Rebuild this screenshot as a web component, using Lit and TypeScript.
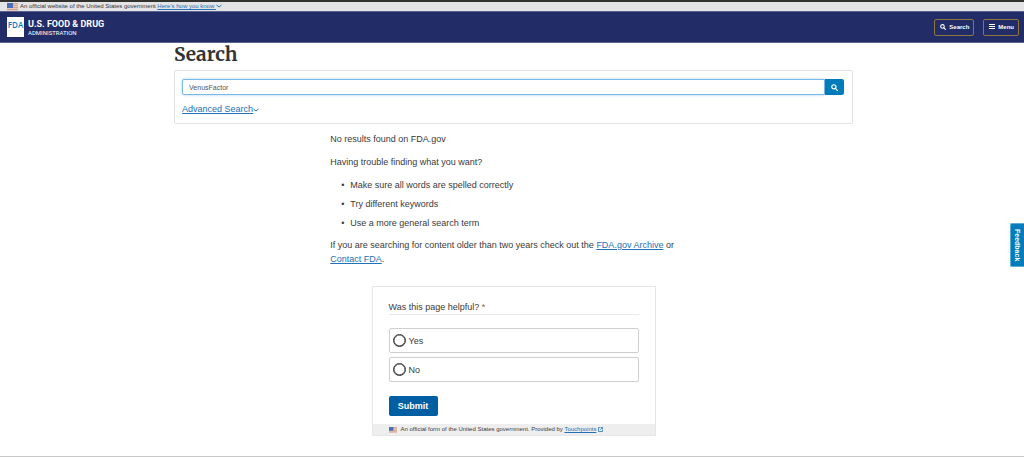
import { LitElement, html, css, svg } from "lit";
import { customElement, property } from "lit/decorators.js";

const magnifier = html`<svg class="icon" viewBox="0 0 16 16" aria-hidden="true">
  <circle cx="6.5" cy="6.5" r="4.8" fill="none" stroke="currentColor" stroke-width="2.8" />
  <path d="M10.500 10.500l4 4" stroke="currentColor" stroke-width="3" stroke-linecap="round" />
</svg>`;

@customElement("us-flag")
export class UsFlag extends LitElement {
  static styles = css`
    :host { display: block; flex: none; width: 11px; height: 8px; }
    svg { display: block; width: 100%; height: 100%; }
  `;
  render() {
    return html`<svg viewBox="0 0 22 16" preserveAspectRatio="none" aria-hidden="true">
      <rect width="22" height="16" fill="#e6cbbd" />
      ${[0, 4, 8, 12].map((y) => svg`<rect y=${y} width="22" height="2" fill="#d3a48f" />`)}
      <rect width="12" height="10" fill="#4a6fb8" />
    </svg>`;
  }
}

@customElement("choice-option")
export class ChoiceOption extends LitElement {
  @property() label = "";
  static styles = css`
    :host { display: block; }
    .option {
      display: flex; align-items: center; gap: 3px; height: 25px; box-sizing: border-box;
      padding: 0 4px 0 3px; border: 1px solid #cfcfd1; border-radius: 2px; background: #fff;
    }
    input {
      appearance: none; box-sizing: border-box; width: 13px; height: 13px; margin: 0;
      border: 1px solid #333; outline: 0; border-radius: 50%; background: #fff;
      box-shadow: inset 0 0 0 0.5px #333;
    }
    input:checked { background: #005ea2; }
  `;
  render() {
    return html`<label class="option"><input type="radio" name="helpful" /><span>${this.label}</span></label>`;
  }
}

@customElement("app-root")
export class AppRoot extends LitElement {
  static styles = css`
    :host {
      display: block; position: relative; min-height: 100vh; box-sizing: border-box;
      background: #fff; color: #3a3a3a; border-bottom: 1px solid #c8c8c8;
      font: 9px/14px "Liberation Sans", Arial, sans-serif;
    }
    a { color: #2470b5; }
    button, input { font-family: inherit; }
    button { cursor: pointer; }
    .icon { display: block; width: 7px; height: 7px; }
    .chevron { width: 6px; height: 4px; fill: none; stroke: currentColor; stroke-width: 1; vertical-align: middle; }

    .banner {
      display: flex; align-items: center; gap: 2px; height: 9px; padding: 0 7px;
      border-top: 2px solid #32322e; background: #e4e4e6;
      font-size: 6px; line-height: 9px; color: #333;
    }

    .header {
      display: flex; align-items: center; justify-content: space-between;
      height: 32px; box-sizing: border-box; padding: 0 5px 0 7px;
      border-top: 1px solid #5b6190; border-bottom: 1px solid #5b6190;
      background: #222c67; color: #fff;
    }
    .brand { display: flex; align-items: center; gap: 4px; color: #fff; text-decoration: none; }
    .mark {
      display: flex; justify-content: center; width: 17px; height: 20px; box-sizing: border-box;
      padding-top: 3px; background: #fff; color: #0a7cc1;
      font: 8px/9px "Open Sans", sans-serif; font-weight: 600;
    }
    .name { display: flex; flex-direction: column; font-family: Roboto, sans-serif; }
    .name strong { font-size: 9px; line-height: 10px; }
    .name span { font-size: 6px; line-height: 7px; }
    .actions { display: flex; gap: 9px; }
    .action {
      display: flex; align-items: center; gap: 3px; height: 17px; padding: 0 4px 0 5px;
      border: 1px solid #90763c; border-radius: 2px; background: transparent; color: #fff;
      font-size: 6px; font-weight: 700;
    }
    .action .icon { width: 6px; height: 6px; }

    .page { width: 66.3%; margin: 0 auto 0 17%; }
    h1 {
      margin: 0; padding-bottom: 5px; color: #333;
      font: 700 19px/22px Merriweather, "DejaVu Serif Condensed", "DejaVu Serif", serif;
    }
    .panel {
      display: flex; flex-direction: column; gap: 7px; align-items: flex-start;
      padding: 8px 8px 7px 7px; border: 1px solid #e2e2e4; border-radius: 2px;
    }
    .query { display: flex; align-self: stretch; height: 16px; }
    .query input {
      flex: 1; min-width: 0; box-sizing: border-box; padding: 0 6px; margin: 0;
      border: 1px solid #79b8e6; border-radius: 2px 0 0 2px; outline: 0; color: #555;
      font-size: 7px; box-shadow: 0 0 3px #a5d2f1;
    }
    .query button {
      display: flex; align-items: center; justify-content: center; width: 19px; padding: 0;
      border: 0; border-radius: 0 2px 2px 0; background: #007cba; color: #fff;
    }

    .results { width: 54%; margin: 8px auto 0; }
    .results p { margin: 0 0 9px; }
    ul { margin: 0 0 8px; padding-left: 11px; list-style: none; }
    li { display: flex; }
    li::before { content: "•"; flex: none; width: 9px; }
    li + li { margin-top: 5px; }

    .survey { width: 284px; max-width: 100%; box-sizing: border-box; margin: 20px auto 0; border: 1px solid #e6e6e8; }
    .survey form { padding: 14px 16px 8px; }
    fieldset { display: flex; flex-direction: column; gap: 4px; margin: 0; padding: 0; border: 0; }
    legend { width: 100%; box-sizing: border-box; padding: 0; margin-bottom: 13px; border-bottom: 1px solid #e8e8ea; line-height: 13px; }
    .required { color: #b5522a; }
    .submit {
      display: block; width: 49px; height: 20px; margin-top: 14px; padding: 0; border: 0;
      border-radius: 2px; background: #005ea2; color: #fff; font-size: 9px; font-weight: 700;
    }
    .official { display: flex; align-items: center; gap: 4px; padding: 0 16px; background: #eee; font-size: 6px; line-height: 11px; }
    .official us-flag { width: 8px; height: 6px; }
    .external { width: 5px; height: 5px; fill: none; stroke: currentColor; stroke-width: 1.5; vertical-align: middle; }

    .feedback {
      position: fixed; right: 0; top: 223px; width: 14px; height: 44px; padding: 0;
      border: 1px solid #5eacd4; border-right: 0; border-radius: 2px 0 0 2px;
      background: #007cba; color: #fff; font-size: 7px; font-weight: 700; writing-mode: vertical-rl;
    }
  `;

  private chevron = html`<svg class="chevron" viewBox="0 0 6 4" aria-hidden="true"><path d="M.5 1l2.5 2 2.5-2" /></svg>`;

  firstUpdated() {
    const field = this.renderRoot.querySelector<HTMLInputElement>(".query input");
    field?.focus();
    field?.setSelectionRange(field.value.length, field.value.length);
  }

  render() {
    return html`
      <div class="banner">
        <us-flag></us-flag>
        <span>An official website of the United States government <a href="#">Here’s how you know ${this.chevron}</a></span>
      </div>
      <header class="header">
        <a class="brand" href="#">
          <span class="mark">FDA</span>
          <span class="name"><strong>U.S. FOOD &amp; DRUG</strong><span>ADMINISTRATION</span></span>
        </a>
        <div class="actions">
          <button class="action" type="button">${magnifier} Search</button>
          <button class="action" type="button">
            <svg class="icon" viewBox="0 0 6 6" aria-hidden="true"><path d="M0 .5h6M0 2.500h6M0 4.500h6" stroke="currentColor" stroke-width="1" /></svg>
            Menu
          </button>
        </div>
      </header>
      <main class="page">
        <h1>Search</h1>
        <section class="panel">
          <div class="query">
            <input type="text" aria-label="Search FDA.gov" .value=${"VenusFactor"} />
            <button type="button" aria-label="Search">${magnifier}</button>
          </div>
          <a href="#">Advanced Search${this.chevron}</a>
        </section>
        <section class="results">
          <p>No results found on FDA.gov</p>
          <p>Having trouble finding what you want?</p>
          <ul>
            <li>Make sure all words are spelled correctly</li>
            <li>Try different keywords</li>
            <li>Use a more general search term</li>
          </ul>
          <p>If you are searching for content older than two years check out the <a href="#">FDA.gov Archive</a> or <a href="#">Contact FDA</a>.</p>
        </section>
        <section class="survey">
          <form>
            <fieldset>
              <legend>Was this page helpful? <span class="required">*</span></legend>
              <choice-option label="Yes"></choice-option>
              <choice-option label="No"></choice-option>
            </fieldset>
            <button class="submit" type="button">Submit</button>
          </form>
          <div class="official">
            <us-flag></us-flag>
            <span>An official form of the United States government. Provided by
              <a href="#">Touchpoints</a>
              <a href="#" aria-label="Open Touchpoints"><svg class="external" viewBox="0 0 10 10"><path d="M5 1H1v8h8V5M6 1h3v3M9 1L4.500 5.500" /></svg></a></span>
          </div>
        </section>
      </main>
      <button class="feedback" type="button">Feedback</button>
    `;
  }
}
